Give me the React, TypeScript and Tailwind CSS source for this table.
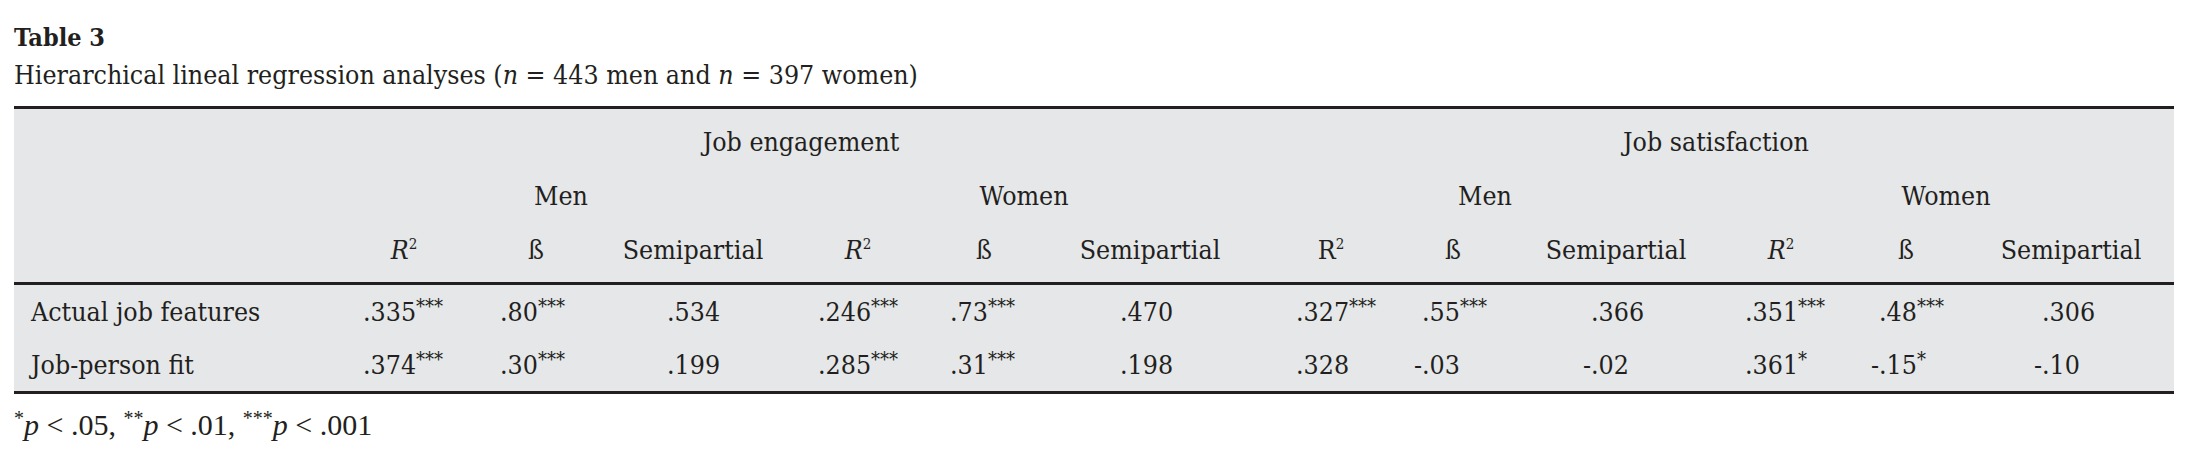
const grid =
  "grid grid-cols-[324px_132px_132px_182px_148px_104px_228px_134px_110px_216px_114px_136px_194px]";

// width of the box left of the decimal point, per column
const decimal = [
  "w-[25px]",
  "w-[30px]",
  "w-[65px]",
  "w-[34px]",
  "w-[18px]",
  "w-[84px]",
  "w-[32px]",
  "w-[24px]",
  "w-[83px]",
  "w-[21px]",
  "w-[41px]",
  "w-[68px]",
];

type Cell = [string, string];

const rows: { label: string; cells: Cell[] }[] = [
  {
    label: "Actual job features",
    cells: [
      [".335", "***"],
      [".80", "***"],
      [".534", ""],
      [".246", "***"],
      [".73", "***"],
      [".470", ""],
      [".327", "***"],
      [".55", "***"],
      [".366", ""],
      [".351", "***"],
      [".48", "***"],
      [".306", ""],
    ],
  },
  {
    label: "Job-person fit",
    cells: [
      [".374", "***"],
      [".30", "***"],
      [".199", ""],
      [".285", "***"],
      [".31", "***"],
      [".198", ""],
      [".328", ""],
      ["-.03", ""],
      ["-.02", ""],
      [".361", "*"],
      ["-.15", "*"],
      ["-.10", ""],
    ],
  },
];

const RSquared = ({ italic = true }: { italic?: boolean }) => (
  <span>
    {italic ? <i>R</i> : "R"}
    <sup className="text-[15px] -top-[10px]">2</sup>
  </span>
);

const subHeads = [
  <RSquared />,
  "ß",
  "Semipartial",
  <RSquared />,
  "ß",
  "Semipartial",
  <RSquared italic={false} />,
  "ß",
  "Semipartial",
  <RSquared />,
  "ß",
  "Semipartial",
];

const Stars = ({ n }: { n: string }) =>
  n ? <sup className="text-[20px] -top-[8px]">{n}</sup> : null;

export default function App() {
  return (
    <div className="min-h-screen bg-white text-[#231f20] font-['DejaVu_Serif_Condensed',serif] pl-[14px] pt-[23px]">
      <h1 className="text-[25px] leading-[30px] font-bold">Table 3</h1>
      <p className="mt-[7px] text-[26.5px] leading-[30px]">
        Hierarchical lineal regression analyses (<i>n</i> = 443 men and{" "}
        <i>n</i> = 397 women)
      </p>

      <div className="mt-[16px] w-[2160px] border-y-[3px] border-[#231f20] bg-[#e6e7e9] text-[26.5px] leading-[30px]">
        <div className={`${grid} border-b-[3px] border-[#231f20]`}>
          <div />
          <div className="col-span-6 h-[60px] pt-[6px] flex items-center justify-center">
            Job engagement
          </div>
          <div className="col-span-6 h-[60px] pt-[6px] flex items-center justify-center">
            Job satisfaction
          </div>

          <div />
          <div className="col-span-3 h-[54px] flex items-center justify-center">Men</div>
          <div className="col-span-3 h-[54px] flex items-center justify-center">Women</div>
          <div className="col-span-3 h-[54px] pr-[18px] flex items-center justify-center">Men</div>
          <div className="col-span-3 h-[54px] flex items-center justify-center">Women</div>

          <div />
          {subHeads.map((h, i) => (
            <div key={i} className="h-[59px] pb-[6px] flex items-center justify-center">
              {h}
            </div>
          ))}
        </div>

        {rows.map((r) => (
          <div key={r.label} className={grid}>
            <div className="h-[53px] pl-[17px] flex items-center">{r.label}</div>
            {r.cells.map(([v, s], i) => {
              const neg = v.startsWith("-");
              return (
                <div key={i} className="h-[53px] flex items-center">
                  <span className={`${decimal[i]} shrink-0 text-right`}>{neg ? "-" : ""}</span>
                  <span>
                    {neg ? v.slice(1) : v}
                    <Stars n={s} />
                  </span>
                </div>
              );
            })}
          </div>
        ))}
      </div>

      <p className="mt-[14px] font-['Liberation_Serif',serif] text-[30px] leading-[34px]">
        <sup className="text-[20px] -top-[10px]">*</sup>
        <i>p</i> &lt; .05, <sup className="text-[20px] -top-[10px]">**</sup>
        <i>p</i> &lt; .01, <sup className="text-[20px] -top-[10px]">***</sup>
        <i>p</i> &lt; .001
      </p>
    </div>
  );
}
